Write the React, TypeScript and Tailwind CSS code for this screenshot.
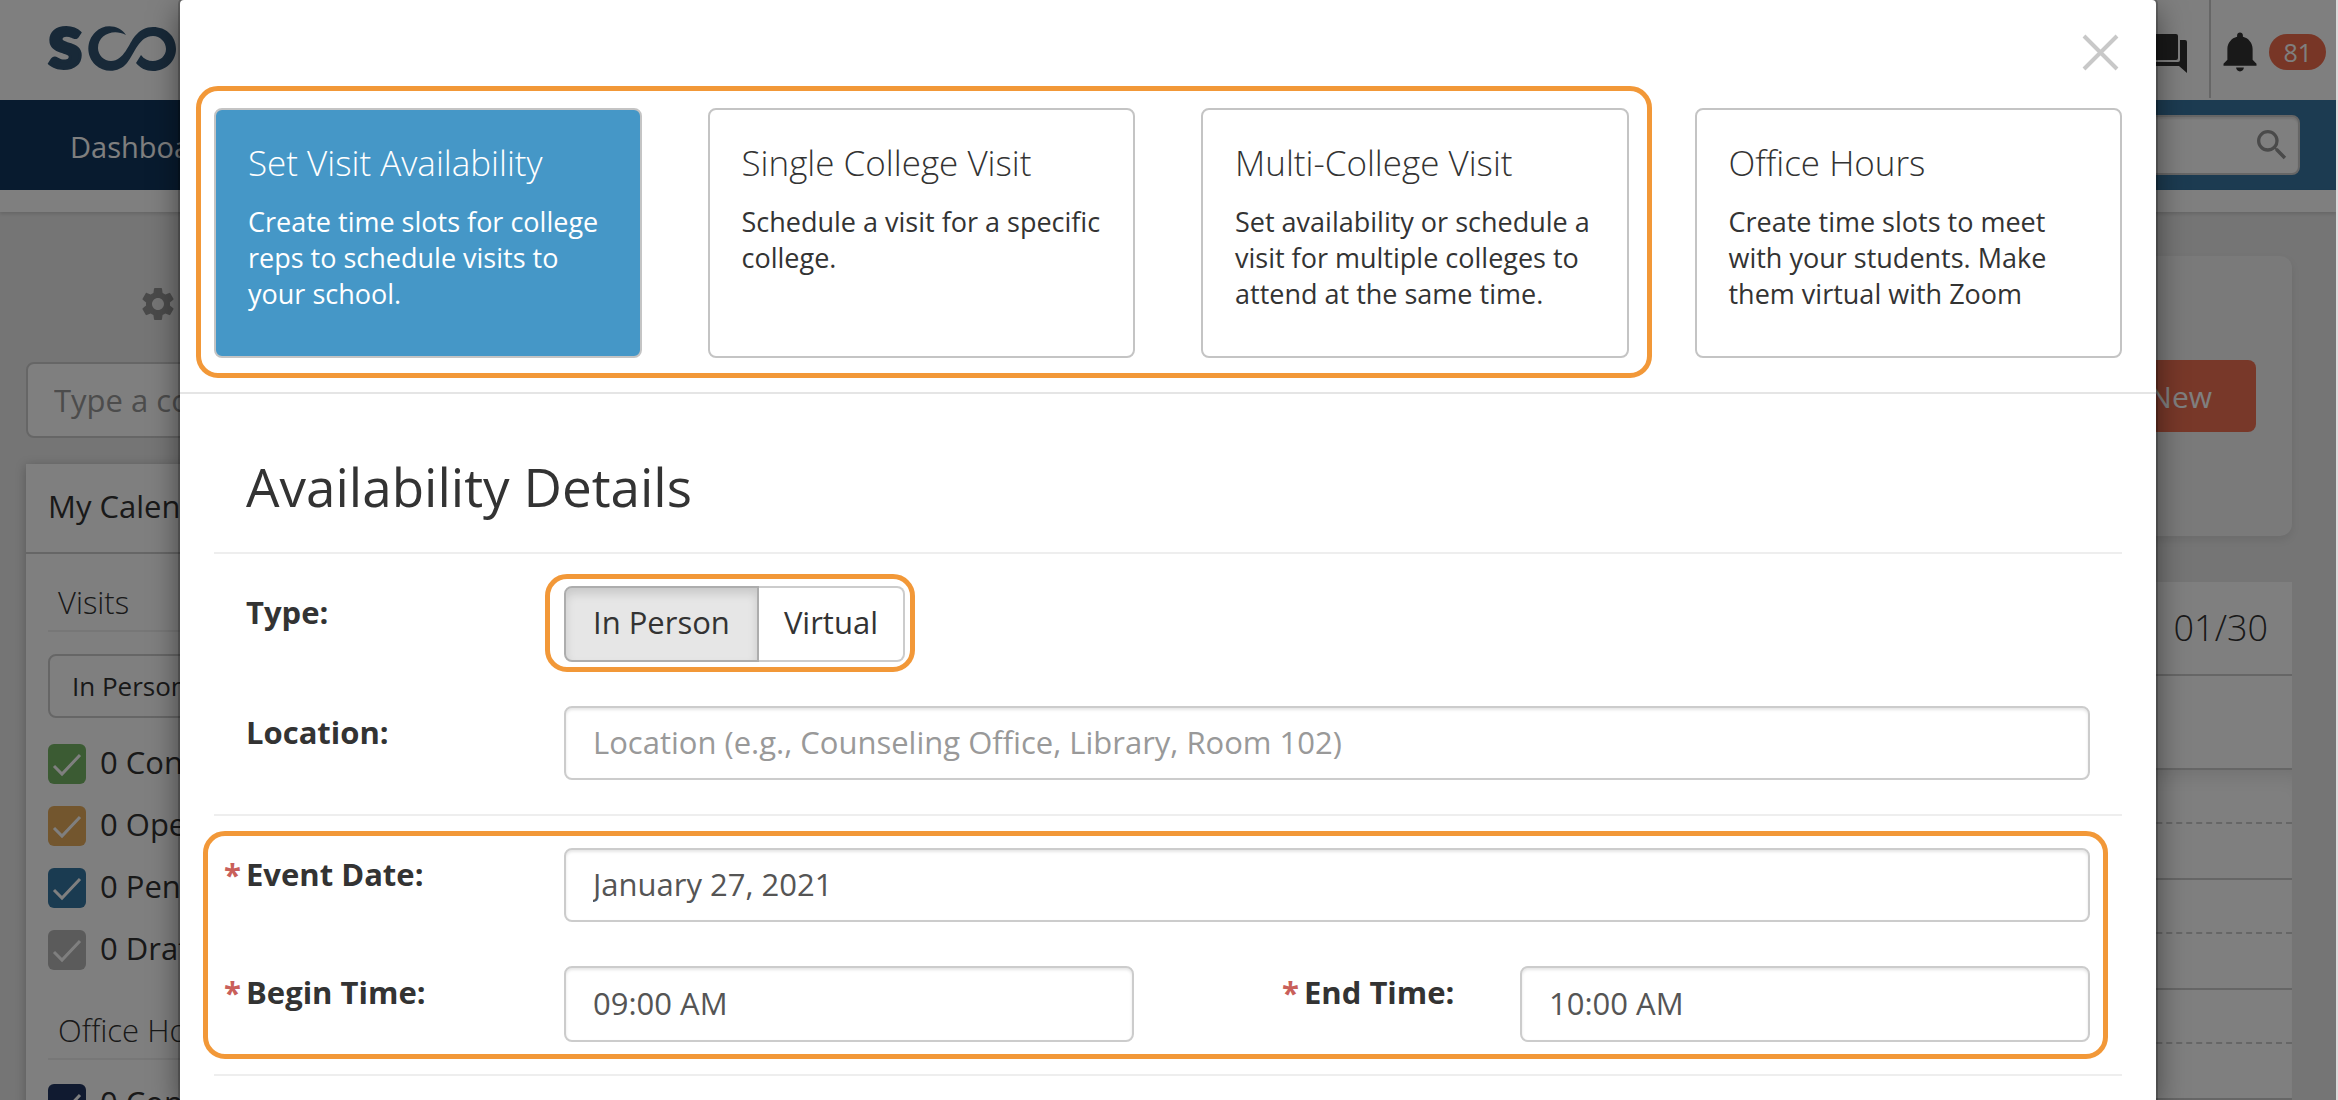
import React, { useState } from 'react';
import { MdSearch, MdSettings } from 'react-icons/md';
import { IoMdNotifications } from 'react-icons/io';

type VisitType = 'In Person' | 'Virtual';

const visitOptions = [
    { title: 'Set Visit Availability', text: 'Create time slots for college reps to schedule visits to your school.' },
    { title: 'Single College Visit', text: 'Schedule a visit for a specific college.' },
    { title: 'Multi-College Visit', text: 'Set availability or schedule a visit for multiple colleges to attend at the same time.' },
];

const officeHours = { title: 'Office Hours', text: 'Create time slots to meet with your students. Make them virtual with Zoom' };

const visitFilters = [
    { label: '0 Confirmed', color: 'bg-[#76b666]' },
    { label: '0 Open', color: 'bg-[#e6ac5c]' },
    { label: '0 Pending', color: 'bg-[#3476a2]' },
    { label: '0 Drafts', color: 'bg-[#b6b6b6]' },
];

const officeFilters = [{ label: '0 Confirmed', color: 'bg-[#203460]' }];

const hours = [9, 10, 11, 12];

const Logo = () => (
    <a href="#" aria-label="Scoir" className="flex items-center text-[#305270]">
        <svg width="136" height="52" viewBox="44 22 136 52" fill="none" className="overflow-visible">
            <text x="48" y="68" fontFamily="Lato" fontWeight="900" fontSize="78" fill="currentColor" stroke="currentColor" strokeWidth="3">s</text>
            <path d="M126 35C120 25 104 23 95.500 32C86 41 86 56 95.500 65C104 73 119 73 127 63C135 53 139 36 153 36C160 36 166 42 166 49C166 56 160 61 153 61C148 61 144 59 141 55L136 63C140 68 146 71 153 71C166 71 176 61 176 49C176 36 166 27 153 27C146 27 140 30 135 36C129 43 124 61 111 61C104 61 98 55 98 48C98 35 113 28 126 35Z" fill="currentColor" />
        </svg>
    </a>
);

const ChatIcon = () => (
    <svg width="46" height="40" viewBox="0 0 46 40" fill="#333">
        <rect x="0" y="0" width="37" height="26" rx="2" />
        <path d="M39 6h5q2 0 2 2v31l-8-7H8q-2 0-2-2v-2h31q2 0 2-2z" />
    </svg>
);

const FilterRow = ({ label, color }: { label: string; color: string }) => (
    <label className="flex h-10 items-center gap-[14px] text-[31px] leading-9 whitespace-nowrap">
        <span className={`relative h-10 w-[38px] shrink-0 rounded-md ${color}`}>
            <input type="checkbox" defaultChecked className="absolute inset-0 size-full appearance-none" />
            <svg className="pointer-events-none absolute inset-0" width="38" height="40" viewBox="0 0 38 40" fill="none" stroke="#fff" strokeWidth="3">
                <path d="M6 22l8 8L32 11" />
            </svg>
        </span>
        <span className="pb-1">{label}</span>
    </label>
);

const Header = () => (
    <header className="bg-white">
        <div className="flex h-[100px] items-start justify-between">
            <div className="pt-[22px] pl-11">
                <Logo />
            </div>
            <div className="flex">
                <a href="#" aria-label="Messages" className="h-[98px] border-r-2 border-[#ccc] pt-[34px] pr-[22px]">
                    <ChatIcon />
                </a>
                <a href="#" aria-label="Notifications" className="flex items-start gap-[5px] pt-7 pr-[10px] pl-[5px]">
                    <IoMdNotifications className="size-12 fill-[#333]" />
                    <span className="mt-[6px] h-9 rounded-full bg-[#f06c4c] px-[14px] text-[25px] leading-9 text-white">81</span>
                </a>
            </div>
        </div>
        <nav className="flex h-[90px] items-center justify-between bg-[#3876a2]">
            <a href="#" className="flex h-full w-[540px] items-center bg-[#10365e] pt-1 pl-[70px] text-[29px] text-white">
                Dashboard
            </a>
            <div className="mr-9 flex h-[60px] w-[480px] items-center rounded-lg border-2 border-[#ccc] bg-white pr-[6px] shadow-[inset_0_2px_2px_rgba(0,0,0,0.1)]">
                <input aria-label="Search" className="h-full min-w-0 flex-1" />
                <MdSearch className="size-10 fill-[#949494]" />
            </div>
        </nav>
        <div className="h-[22px] shadow-[0_2px_3px_rgba(0,0,0,0.12)]" />
    </header>
);

const Sidebar = () => (
    <aside className="flex w-[480px] shrink-0 flex-col pl-[26px]">
        <div className="pt-[72px] pl-28">
            <MdSettings className="size-10 fill-[#949494]" />
        </div>
        <input
            aria-label="College"
            placeholder="Type a college name"
            className="mt-[38px] h-[76px] rounded-lg border-2 border-[#ccc] bg-white px-[26px] text-[31px] placeholder:text-[#999]"
        />
        <section className="mt-[26px] bg-white pb-10 shadow-[0_2px_10px_rgba(0,0,0,0.25)]">
            <h2 className="border-b-2 border-[#ccc] px-[22px] pt-5 pb-6 text-[31px] leading-11">My Calendar</h2>
            <div className="px-[22px]">
                <h3 className="mt-[26px] border-b-2 border-[#eee] pb-[6px] pl-[10px] text-[31px] leading-11 font-light">Visits</h3>
                <select aria-label="Visit type" className="mt-[22px] mb-[26px] h-16 w-full appearance-none rounded-lg border-2 border-[#ccc] bg-white px-[22px] text-[26px]">
                    <option>In Person &amp; Virtual</option>
                </select>
                <div className="flex flex-col gap-[22px]">
                    {visitFilters.map((filter) => <FilterRow key={filter.label} {...filter} />)}
                </div>
                <h3 className="mt-[38px] mb-6 border-b-2 border-[#eee] pb-[6px] pl-[10px] text-[31px] leading-11 font-light">Office Hours</h3>
                {officeFilters.map((filter) => <FilterRow key={filter.label} {...filter} />)}
            </div>
        </section>
    </aside>
);

const Schedule = () => (
    <main className="flex-1 pt-11 pr-11 pl-10">
        <div className="flex h-[280px] items-start justify-end rounded-xl bg-[#f4f4f4] pt-[104px] pr-9 shadow-[0_4px_8px_rgba(0,0,0,0.08)]">
            <button className="h-[72px] rounded-lg bg-[#f07052] px-11 text-[30px] text-white">New</button>
        </div>
        <div className="mt-[46px] bg-white">
            <div className="flex h-[94px] items-center justify-end border-b-2 border-[#ccc] pr-6 text-[36px] font-light">01/30</div>
            <div className="h-[94px] border-b-2 border-[#ccc]" />
            <div className="shadow-[inset_0_20px_24px_-18px_rgba(0,0,0,0.15)]">
                {hours.map((hour) => (
                    <div key={hour} className="h-[110px] border-b-2 border-[#ccc]">
                        <div className="h-[54px] border-b-2 border-dashed border-[#ccc]" />
                    </div>
                ))}
            </div>
        </div>
    </main>
);

const Highlight = ({ className }: { className: string }) => (
    <span aria-hidden="true" className={`pointer-events-none absolute rounded-[22px] border-5 border-[#f29838] ${className}`} />
);

const OptionCard = ({ title, text, active, onClick }: { title: string; text: string; active: boolean; onClick: () => void }) => (
    <button
        onClick={onClick}
        className={`flex h-[250px] flex-col items-start rounded-lg border-2 border-[#c4c4c4] px-8 pt-7 text-left ${active ? 'bg-[#4597c7] text-white' : 'bg-white'}`}
    >
        <span className="text-[35px] leading-[50px] font-light">{title}</span>
        <span className="mt-4 text-[27px] leading-9">{text}</span>
    </button>
);

const inputClass = 'min-w-0 flex-1 rounded-lg border-2 border-[#ccc] bg-white px-[27px] pb-[2px] text-[31px] text-[#555] shadow-[inset_0_2px_3px_rgba(0,0,0,0.1)] placeholder:text-[#999]';
const labelClass = 'relative shrink-0 pt-1 text-[31px] leading-11 font-bold';

const Required = () => <span className="absolute right-full mr-[5px] text-[#c9605a]">*</span>;

const AvailabilityModal = () => {
    const [selected, setSelected] = useState('Set Visit Availability');
    const [visitType, setVisitType] = useState<VisitType>('In Person');

    return (
        <div role="dialog" aria-label="Availability Details" className="relative min-h-screen rounded-t-[4px] bg-white shadow-[0_0_0_2px_rgba(0,0,0,0.2),0_10px_30px_rgba(0,0,0,0.5)]">
            <button aria-label="Close" className="absolute top-[34px] right-[37px]">
                <svg width="37" height="37" viewBox="0 0 37 37" stroke="#c8c8c8" strokeWidth="4">
                    <path d="M2 2l33 33M35 2L2 35" />
                </svg>
            </button>

            <div className="grid grid-cols-4 gap-[66px] border-b-2 border-[#e5e5e5] px-[34px] pt-[108px] pb-[34px]">
                <div className="relative col-span-3 grid grid-cols-3 gap-[66px]">
                    {visitOptions.map((option) => (
                        <OptionCard key={option.title} {...option} active={selected === option.title} onClick={() => setSelected(option.title)} />
                    ))}
                    <Highlight className="-top-[22px] -right-[23px] -bottom-5 -left-[18px]" />
                </div>
                <OptionCard {...officeHours} active={selected === officeHours.title} onClick={() => setSelected(officeHours.title)} />
            </div>

            <div className="px-[34px]">
                <h1 className="border-b-2 border-[#eee] px-8 pt-[57px] pb-[29px] text-[53px] leading-[72px]">Availability Details</h1>

                <div className="flex flex-col gap-11 border-b-2 border-[#eee] px-8 pt-8 pb-[34px]">
                    <div className="flex">
                        <span id="type-label" className={`w-[318px] ${labelClass}`}>Type:</span>
                        <div role="group" aria-labelledby="type-label" className="relative flex h-[76px] text-[31px]">
                            <button
                                onClick={() => setVisitType('In Person')}
                                className={`rounded-l-lg border-2 px-[27px] pb-1 ${visitType === 'In Person' ? 'border-[#adadad] bg-[#e6e6e6] shadow-[inset_0_6px_10px_rgba(0,0,0,0.125)]' : 'border-[#ccc] bg-white'}`}
                            >
                                In Person
                            </button>
                            <button
                                onClick={() => setVisitType('Virtual')}
                                className={`rounded-r-lg border-2 border-l-0 px-[25px] pb-1 ${visitType === 'Virtual' ? 'border-[#adadad] bg-[#e6e6e6] shadow-[inset_0_6px_10px_rgba(0,0,0,0.125)]' : 'border-[#ccc] bg-white'}`}
                            >
                                Virtual
                            </button>
                            <Highlight className="-top-3 -right-[10px] -bottom-[10px] -left-[19px]" />
                        </div>
                    </div>
                    <div className="flex">
                        <label htmlFor="location" className={`w-[318px] ${labelClass}`}>Location:</label>
                        <input id="location" placeholder="Location (e.g., Counseling Office, Library, Room 102)" className={`h-[74px] ${inputClass}`} />
                    </div>
                </div>

                <div className="relative flex flex-col gap-11 border-b-2 border-[#eee] px-8 py-8">
                    <div className="flex">
                        <label htmlFor="event-date" className={`w-[318px] ${labelClass}`}><Required />Event Date:</label>
                        <input id="event-date" defaultValue="January 27, 2021" className={`h-[74px] ${inputClass}`} />
                    </div>
                    <div className="flex">
                        <label htmlFor="begin-time" className={`w-[318px] ${labelClass}`}><Required />Begin Time:</label>
                        <input id="begin-time" defaultValue="09:00 AM" className={`h-[76px] ${inputClass}`} />
                        <label htmlFor="end-time" className={`ml-[170px] w-[216px] ${labelClass}`}><Required />End Time:</label>
                        <input id="end-time" defaultValue="10:00 AM" className={`h-[76px] ${inputClass}`} />
                    </div>
                    <Highlight className="top-[15px] right-[14px] bottom-[15px] -left-[11px]" />
                </div>
            </div>
        </div>
    );
};

export default function App() {
    return (
        <div className="relative h-screen overflow-hidden border-r-2 border-[#dcdcdc] bg-[#eaeaea] font-['Open_Sans',sans-serif] text-[#333]">
            <Header />
            <div className="flex">
                <Sidebar />
                <Schedule />
            </div>
            <div className="absolute inset-0 overflow-hidden bg-black/50 px-[180px]">
                <AvailabilityModal />
            </div>
        </div>
    );
}
